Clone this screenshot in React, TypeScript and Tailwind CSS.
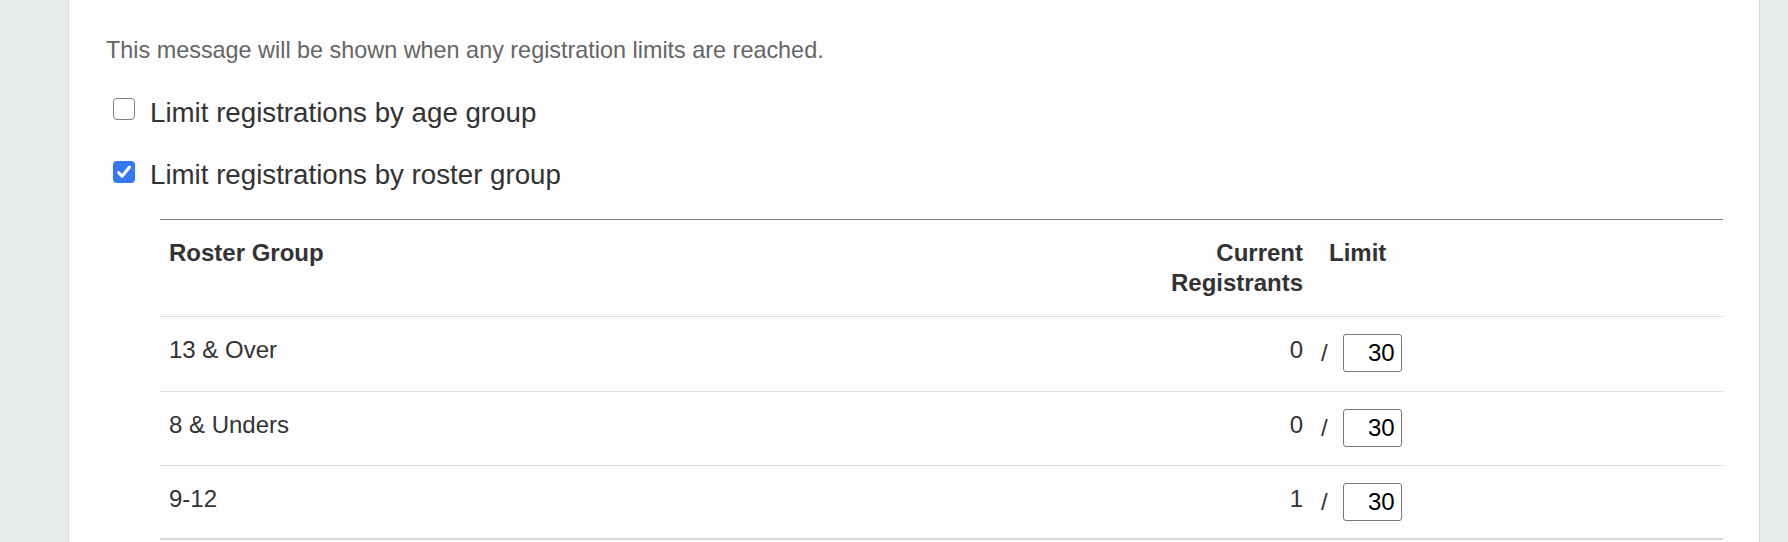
import React from "react";

const rows = [
  { name: "13 & Over", current: 0, limit: 30, h: "h-[75px]", last: false },
  { name: "8 & Unders", current: 0, limit: 30, h: "h-[74px]", last: false },
  { name: "9-12", current: 1, limit: 30, h: "h-[74px]", last: true },
];

function Checkbox({ checked }: { checked: boolean }) {
  if (checked) {
    return (
      <span className="flex h-[22px] w-[22px] shrink-0 items-center justify-center rounded-[4px] bg-[#3478f6]">
        <svg width="18" height="18" viewBox="0 0 18 18" fill="none">
          <path d="M3.6 9.6 L7.1 13.2 L14.4 4.2" stroke="#ffffff" strokeWidth="3" strokeLinecap="round" strokeLinejoin="round" />
        </svg>
      </span>
    );
  }
  return <span className="block h-[22px] w-[22px] shrink-0 rounded-[4px] border-[1.5px] border-[#7d7d7d] bg-white" />;
}

export default function App() {
  return (
    <div
      className="flex h-[542px] w-full overflow-hidden bg-[#e6ecec]"
      style={{ fontFamily: '"Liberation Sans", Arial, Helvetica, sans-serif' }}
    >
      <div className="w-[69px] shrink-0 border-r border-[#d3dcdc] bg-[#e6ecec]" />
      <div className="flex w-[1690px] shrink-0 flex-col bg-[#fdfdfd] pl-[37px] pr-[36px] pt-[35px]">
        <p className="text-[23.4px] leading-[30px] text-[#666666]">
          This message will be shown when any registration limits are reached.
        </p>

        <label className="mt-[32px] ml-[7px] flex items-start gap-[15px]">
          <span className="pt-[1px]">
            <Checkbox checked={false} />
          </span>
          <span className="text-[27.7px] leading-[32px] text-[#333333]">Limit registrations by age group</span>
        </label>

        <label className="mt-[30px] ml-[7px] flex items-start gap-[15px]">
          <span className="pt-[2px]">
            <Checkbox checked={true} />
          </span>
          <span className="text-[27.7px] leading-[32px] text-[#333333]">Limit registrations by roster group</span>
        </label>

        <div className="ml-[54px] mt-[28px] flex flex-col border-t border-[#808080] text-[24px] leading-[30px] text-[#333333]">
          <div className="flex h-[97px] border-b border-[#dddddd] pt-[18px] font-bold">
            <div className="flex-1 pl-[9px]">Roster Group</div>
            <div className="w-[160px] text-right">
              Current
              <br />
              Registrants
            </div>
            <div className="w-[420px] pl-[26px]">Limit</div>
          </div>
          {rows.map((r) => (
            <div
              key={r.name}
              className={`flex ${r.h} ${r.last ? "border-b-2 border-[#d9d9d9]" : "border-b border-[#dddddd]"}`}
            >
              <div className="flex-1 pl-[9px] pt-[18px]">{r.name}</div>
              <div className="w-[160px] pt-[18px] text-right">{r.current}</div>
              <div className="flex w-[420px] items-center self-start pt-[17px]">
                <span className="ml-[18px] leading-[30px]">/</span>
                <input
                  readOnly
                  value={r.limit}
                  className="ml-[15px] h-[38px] w-[59px] rounded-[3px] border border-[#777777] bg-white pr-[6px] text-right text-[24px] text-black outline-none"
                  style={{ fontFamily: '"Liberation Sans", Arial, Helvetica, sans-serif' }}
                />
              </div>
            </div>
          ))}
        </div>
      </div>
      <div className="flex-1 border-l border-[#d3dcdc] bg-[#e6ecec]" />
    </div>
  );
}
